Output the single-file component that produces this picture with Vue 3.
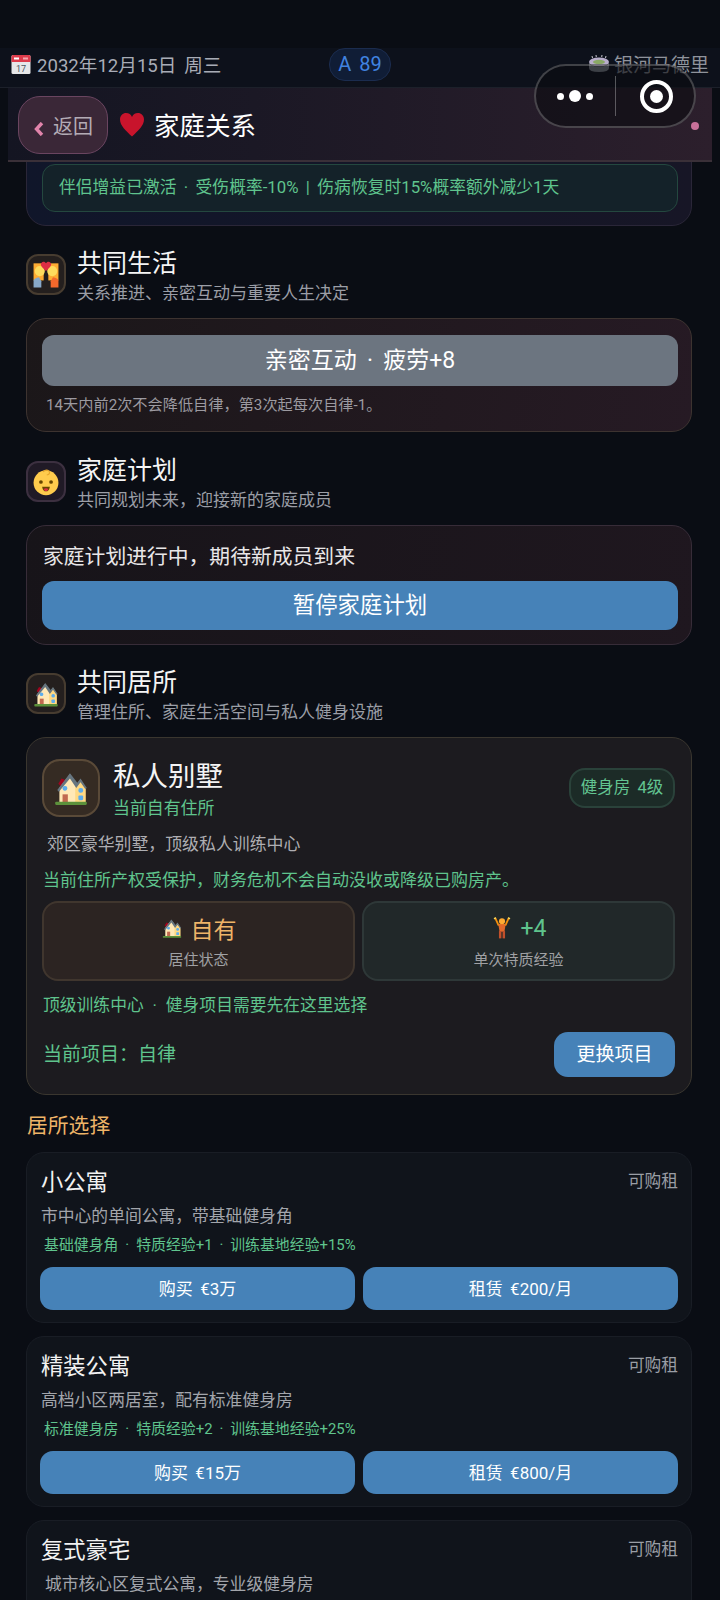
<script setup>
const homes = [
  { name: '小公寓', desc: '市中心的单间公寓，带基础健身角', perks: '基础健身角 · 特质经验+1 · 训练基地经验+15%', buy: '购买 €3万', rent: '租赁 €200/月' },
  { name: '精装公寓', desc: '高档小区两居室，配有标准健身房', perks: '标准健身房 · 特质经验+2 · 训练基地经验+25%', buy: '购买 €15万', rent: '租赁 €800/月' },
  { name: '复式豪宅', desc: '城市核心区复式公寓，专业级健身房', indent: true }
]
</script>

<template>
  <div class="page">
    <svg class="defs" width="0" height="0" aria-hidden="true">
      <symbol id="house" viewBox="0 0 36 36">
        <path d="M6 14 L9 9 L14 11 L9 17Z" fill="#a0041e"/>
        <path d="M7 18 L17 5 L24 15 L24 32 L7 32Z" fill="#ffe8b6"/>
        <path d="M22 16 L27 10 L32 18 L32 32 L22 32Z" fill="#ffd983"/>
        <path d="M5 20 L17 4 L24 13 L27 9 L33 18 L31.5 19 L27 12.5 L23 18 L17 9 L6.5 21.5Z" fill="#66757f"/>
        <rect x="10" y="16" width="4.5" height="4.5" rx="2" fill="#5dadec"/>
        <rect x="25" y="18" width="4.5" height="4.5" rx="2" fill="#5dadec"/>
        <rect x="25" y="25" width="4.5" height="4.5" rx="1" fill="#5dadec"/>
        <rect x="10" y="24" width="5" height="8" fill="#c1694f"/>
        <rect x="3" y="31" width="30" height="3" rx="1" fill="#5c913b"/>
      </symbol>
      <symbol id="couple" viewBox="0 0 36 36">
        <rect x="2" y="3" width="13" height="22" fill="#ffac33"/>
        <rect x="21" y="3" width="13" height="22" fill="#ffac33"/>
        <circle cx="10" cy="13" r="6.500" fill="#ffdc5d"/>
        <circle cx="26" cy="13" r="6.500" fill="#ffdc5d"/>
        <path d="M2 25 Q3 22 9 21 L12 26 L12 34 L2 34Z" fill="#88a9c9"/>
        <path d="M34 25 Q33 22 27 21 L24 26 L24 34 L34 34Z" fill="#f4682c"/>
        <path d="M18 13 C13 8 10 5.500 12 2.500 C14 0 17 1 18 3 C19 1 22 0 24 2.500 C26 5.500 23 8 18 13Z" fill="#dd2e44"/>
      </symbol>
      <symbol id="baby" viewBox="0 0 36 36">
        <circle cx="18" cy="19" r="16" fill="#ffcc4d"/>
        <path d="M14 5 Q18 1 22 4 Q24 8 19 9" fill="none" stroke="#e6a82e" stroke-width="1.500"/>
        <circle cx="11.500" cy="18" r="2.400" fill="#664500"/>
        <circle cx="24.500" cy="18" r="2.400" fill="#664500"/>
        <path d="M13 24 H23 Q22 30 18 30 Q14 30 13 24Z" fill="#664500"/>
        <path d="M15 27 Q18 25 21 27 Q20 30 18 30 Q16 30 15 27Z" fill="#dd2e44"/>
      </symbol>
      <symbol id="person" viewBox="0 0 36 36">
        <path d="M7 2 L12 13 L24 13 L29 2" fill="none" stroke="#f4900c" stroke-width="3"/>
        <path d="M5 3 L8 1 M28 1 L31 3" stroke="#ffdc5d" stroke-width="2.500"/>
        <circle cx="18" cy="7" r="5" fill="#ffac33"/>
        <path d="M12 12 H24 L22 24 H14Z" fill="#e1692b"/>
        <rect x="13" y="23" width="4" height="12" fill="#c1502b"/>
        <rect x="19" y="23" width="4" height="12" fill="#c1502b"/>
      </symbol>
    </svg>

    <div class="top">
      <div class="status">
        <div class="status-left">
          <svg class="cal" viewBox="0 0 20 20">
            <rect x="0.500" y="1" width="19" height="19" rx="1.500" fill="#e6e7e8"/>
            <path d="M.5 2.500 Q.5 1 2 1 H18 Q19.500 1 19.500 2.500 V8 H.5Z" fill="#dd3b4b"/>
            <rect x="3" y="3.500" width="5" height="2" fill="#fff"/>
            <rect x="12" y="3.500" width="5" height="2" fill="#f4a5ad"/>
            <text x="10" y="17.500" text-anchor="middle" class="cal-num">17</text>
          </svg>
          <span>2032年12月15日 周三</span>
        </div>
        <div class="rank">A 89</div>
        <div class="status-right">
          <svg class="stadium" viewBox="0 0 20 20">
            <path d="M3 2 L3.500 4 M7 1 L7.300 3 M13 1 L12.700 3 M17 2 L16.500 4" stroke="#c8c8d0" stroke-width="1"/>
            <ellipse cx="10" cy="8" rx="10" ry="4.500" fill="#b8aecb"/>
            <ellipse cx="10" cy="8" rx="6" ry="2.200" fill="#8aa866"/>
            <path d="M0 8 V14 Q0 18 10 18 Q20 18 20 14 V8 Q20 12.500 10 12.500 Q0 12.500 0 8Z" fill="#8d959e"/>
          </svg>
          <span>银河马德里</span>
        </div>
      </div>
      <header class="head">
        <button class="back">
          <svg class="chev" viewBox="0 0 10 14"><polyline points="8,1 2.500,7 8,13" fill="none" stroke="#e184ab" stroke-width="3.400"/></svg>
          <span>返回</span>
        </button>
        <svg class="heart" viewBox="0 0 24 24"><path d="M12 23.500 C6 18 0 12.500 0 6.500 C0 2.500 3 0 6 0 C9 0 11 1.500 12 4 C13 1.500 15 0 18 0 C21 0 24 2.500 24 6.500 C24 12.500 18 18 12 23.500Z" fill="#c8142c"/></svg>
        <h1>家庭关系</h1>
      </header>
    </div>

    <div class="capsule">
      <div class="dots"><i class="s"></i><i class="l"></i><i class="s"></i></div>
      <div class="sep"></div>
      <div class="ring"><i></i></div>
    </div>
    <i class="pink"></i>

    <main class="content">
      <section class="card first">
        <div class="hint">伴侣增益已激活 · 受伤概率-10% | 伤病恢复时15%概率额外减少1天</div>
      </section>

      <div class="sec sec-life">
        <div class="ico amber"><svg class="ico-svg"><use href="#couple"/></svg></div>
        <div><h2>共同生活</h2><p>关系推进、亲密互动与重要人生决定</p></div>
      </div>
      <section class="card life">
        <button class="btn grey big">亲密互动 · 疲劳+8</button>
        <p class="note">14天内前2次不会降低自律，第3次起每次自律-1。</p>
      </section>

      <div class="sec sec-plan">
        <div class="ico plum"><svg class="ico-svg"><use href="#baby"/></svg></div>
        <div><h2>家庭计划</h2><p>共同规划未来，迎接新的家庭成员</p></div>
      </div>
      <section class="card plan">
        <div class="plan-text">家庭计划进行中，期待新成员到来</div>
        <button class="btn blue plan-btn">暂停家庭计划</button>
      </section>

      <div class="sec sec-home">
        <div class="ico amber"><svg class="ico-svg"><use href="#house"/></svg></div>
        <div><h2>共同居所</h2><p>管理住所、家庭生活空间与私人健身设施</p></div>
      </div>
      <section class="card home">
        <div class="home-top">
          <div class="home-ico"><svg class="home-svg"><use href="#house"/></svg></div>
          <div class="home-name">
            <h3>私人别墅</h3>
            <div class="green own">当前自有住所</div>
          </div>
          <div class="badge">健身房 4级</div>
        </div>
        <p class="home-desc">郊区豪华别墅，顶级私人训练中心</p>
        <p class="green line">当前住所产权受保护，财务危机不会自动没收或降级已购房产。</p>
        <div class="stats">
          <div class="stat warm">
            <div class="val"><svg class="val-ico"><use href="#house"/></svg><span class="gold">自有</span></div>
            <div class="lbl">居住状态</div>
          </div>
          <div class="stat cool">
            <div class="val"><svg class="val-ico"><use href="#person"/></svg><span class="mint">+4</span></div>
            <div class="lbl">单次特质经验</div>
          </div>
        </div>
        <p class="green line2">顶级训练中心 · 健身项目需要先在这里选择</p>
        <div class="project">
          <span class="green cur">当前项目：自律</span>
          <button class="btn blue swap">更换项目</button>
        </div>
      </section>

      <div class="pick">居所选择</div>
      <section v-for="h in homes" :key="h.name" class="item">
        <div class="item-top"><h4>{{ h.name }}</h4><span>可购租</span></div>
        <p class="item-desc" :class="{ indent: h.indent }">{{ h.desc }}</p>
        <p v-if="h.perks" class="perks">{{ h.perks }}</p>
        <div v-if="h.buy" class="item-btns">
          <button class="btn blue small">{{ h.buy }}</button>
          <button class="btn blue small">{{ h.rent }}</button>
        </div>
      </section>
    </main>
  </div>
</template>

<style>
html, body { margin: 0; background: #0a0d14; }
</style>

<style scoped>
* { box-sizing: border-box; }
h1, h2, h3, h4, p { margin: 0; font-weight: 400; }
.page {
  position: relative;
  width: 720px;
  height: 1600px;
  overflow: hidden;
  background: #0a0d14;
  color: #fff;
  font-family: Roboto, "Noto Sans CJK SC", sans-serif;
  font-weight: 400;
  word-spacing: .2em;
}
.defs { position: absolute; }
.top { position: absolute; top: 48px; left: 0; width: 720px; z-index: 3; }
.status {
  height: 40px;
  background: #0d111b;
  border-bottom: 1px solid #1c202a;
  display: flex;
  align-items: center;
  justify-content: space-between;
  padding: 0 11px 8px 11px;
  color: #a8acb6;
  font-size: 18.600px;
  position: relative;
}
.status-left, .status-right { display: flex; align-items: center; }
.cal { width: 20px; height: 20px; margin-right: 6px; }
.cal-num { font-size: 9px; fill: #4a5560; font-family: Roboto, sans-serif; }
.rank {
  position: absolute;
  left: 329px;
  top: 0;
  width: 62px;
  height: 33px;
  border-radius: 16px;
  background: #101d36;
  border: 1px solid #1b2c4e;
  color: #4083e0;
  font-size: 20px;
  line-height: 31px;
  text-align: center;
}
.status-right { font-size: 19px; color: #8f939c; }
.stadium { width: 20px; height: 20px; margin-right: 5px; }
.head {
  margin: 0 8px;
  height: 74px;
  background: linear-gradient(90deg, #141522 0%, #1b1825 35%, #2c1f2c 100%);
  border-bottom: 2px solid #3a3038;
  display: flex;
  align-items: center;
  padding: 0 0 0 10px;
}
.back {
  width: 90px;
  height: 58px;
  margin-top: 2px;
  border-radius: 22px;
  background: #3a2737;
  border: 1px solid #6a4560;
  display: flex;
  align-items: center;
  justify-content: flex-start;
  padding: 0 0 0 15px;
  color: #b3abb5;
  font: inherit;
  font-size: 20px;
}
.chev { width: 10px; height: 14px; margin: 8px 9px 0 0; }
.heart { width: 24px; height: 24px; margin: 2px 0 0 12px; }
h1 { font-size: 25.500px; margin: -2px 0 0 10px; color: #fff; }

.capsule {
  position: absolute;
  left: 534px;
  top: 64px;
  width: 162px;
  height: 64px;
  border-radius: 32px;
  background: rgba(12, 11, 16, .62);
  border: 2px solid rgba(255, 255, 255, .22);
  z-index: 4;
  display: flex;
  align-items: center;
}
.dots { width: 78px; display: flex; align-items: center; justify-content: center; gap: 5px; }
.dots i { display: block; border-radius: 50%; background: #fff; }
.dots .s { width: 7px; height: 7px; }
.dots .l { width: 12px; height: 12px; }
.sep { width: 1px; height: 40px; margin-left: 1px; background: rgba(255, 255, 255, .3); }
.ring {
  width: 33px;
  height: 33px;
  margin-left: 24px;
  border-radius: 50%;
  border: 4px solid #fff;
  display: flex;
  align-items: center;
  justify-content: center;
}
.ring i { display: block; width: 13px; height: 13px; border-radius: 50%; background: #fff; }
.pink { position: absolute; left: 691px; top: 122px; width: 8px; height: 8px; border-radius: 50%; background: #c9719a; z-index: 4; }

.content { padding: 130px 28px 0 26px; width: 720px; }
.card {
  width: 666px;
  border-radius: 20px;
  border: 1px solid #2a2a30;
  padding: 0 13px 0 15px;
}
.first { height: 96px; padding-top: 33px; border-color: #2a2638; background: linear-gradient(90deg, #10162a, #171626); }
.hint {
  height: 48px;
  border-radius: 13px;
  background: #142229;
  border: 1px solid #24483f;
  color: #5fc48d;
  font-size: 16.800px;
  line-height: 44px;
  padding-left: 16px;
}
.sec { display: flex; align-items: center; gap: 11px; }
.sec h2 { font-size: 25px; line-height: 32px; color: #f5f5f5; }
.sec p { font-size: 17px; line-height: 24px; color: #9b9ea6; margin-top: 1px; }
.sec-life { margin-top: 22px; }
.sec-plan { margin-top: 23px; }
.sec-home { margin-top: 22px; }
.ico { width: 40px; height: 41px; border-radius: 12px; display: flex; align-items: center; justify-content: center; margin-top: -4px; }
.ico.amber { background: #241f1e; border: 2px solid #473c30; }
.ico.plum { background: #201a26; border: 2px solid #3c3040; }
.ico-svg { width: 28px; height: 28px; }
.life { margin-top: 13px; height: 114px; padding-top: 16px; background: linear-gradient(100deg, #1b1719, #261a24); border-color: #3d3330; }
.btn { display: block; border: 0; color: #fff; font: inherit; cursor: pointer; padding: 0; text-align: center; word-spacing: inherit; }
.grey { background: #6c7580; }
.blue { background: #4682b8; }
.big { width: 636px; height: 51px; border-radius: 12px; font-size: 23px; padding-bottom: 6px; word-spacing: .2em; }
.note { font-size: 15.200px; line-height: 20px; color: #9c9aa0; margin: 9px 0 0 4px; }
.plan { margin-top: 13px; height: 120px; background: linear-gradient(100deg, #171419, #1f171f); border-color: #372c38; }
.plan-text { font-size: 20.800px; line-height: 30px; color: #e9e7e8; padding: 16px 0 0 1px; height: 55px; }
.plan-btn { width: 636px; height: 49px; border-radius: 12px; font-size: 22.400px; padding-bottom: 6px; }
.home { margin-top: 13px; height: 358px; background: #1c1b1f; border-color: #3a362f; padding: 21px 16px 0 15px; }
.home-top { display: flex; align-items: flex-start; }
.home-ico { width: 58px; height: 58px; border-radius: 18px; background: #352b23; border: 2px solid #5a4a38; display: flex; align-items: center; justify-content: center; }
.home-svg { width: 38px; height: 38px; }
.home-name { margin-left: 13px; flex: 1; }
h3 { font-size: 27.500px; line-height: 34px; margin-top: 1px; color: #f4f4f4; }
.green { color: #5fc48d; }
.own { font-size: 16.900px; line-height: 24px; margin-top: 2px; }
.badge { width: 106px; height: 40px; margin-top: 9px; border-radius: 16px; background: #1c2b27; border: 2px solid #2a423a; color: #62c491; font-size: 16.500px; line-height: 35px; text-align: center; }
.home-desc { font-size: 16.900px; line-height: 24px; color: #aeaeb2; margin: 12px 0 0 5px; }
.line { font-size: 17px; line-height: 24px; margin: 12px 0 0 1px; }
.stats { display: flex; gap: 7px; margin-top: 9px; }
.stat { width: 313px; height: 80px; border-radius: 16px; text-align: center; padding-top: 8px; }
.warm { background: #2c2422; border: 2px solid #40362e; }
.cool { background: #212829; border: 2px solid #2e3838; }
.val { height: 34px; display: flex; align-items: center; justify-content: center; gap: 8px; font-size: 23px; }
.val-ico { width: 22px; height: 24px; }
.gold { color: #eeb468; }
.mint { color: #5fc48d; }
.lbl { font-size: 15px; line-height: 22px; color: #a0a1a4; margin-top: 4px; }
.line2 { font-size: 16.800px; line-height: 24px; margin: 12px 0 0 1px; word-spacing: .28em; }
.project { display: flex; align-items: center; justify-content: space-between; margin-top: 15px; }
.cur { font-size: 19px; margin-left: 1px; padding-bottom: 4px; }
.swap { width: 121px; height: 45px; border-radius: 14px; font-size: 19px; padding-bottom: 4px; }
.pick { font-size: 20.800px; line-height: 30px; color: #eeb468; margin: 16px 0 0 1px; }
.item {
  width: 666px;
  height: 171px;
  margin-top: 13px;
  border-radius: 18px;
  background: #10141b;
  border: 1px solid #191d25;
  padding: 11px 13px 0 14px;
}
.pick + .item { margin-top: 11px; }
.item-top { display: flex; justify-content: space-between; align-items: center; height: 32px; }
h4 { font-size: 22.300px; color: #f2f2f2; }
.item-top span { font-size: 16.700px; color: #9a9ea5; }
.item-desc { font-size: 16.800px; line-height: 24px; color: #a2a5ab; margin-top: 8px; }
.indent { padding-left: 4px; }
.perks { font-size: 14.900px; line-height: 22px; color: #5fc48d; margin: 6px 0 0 3px; }
.item-btns { display: flex; gap: 8px; margin: 11px 0 0 -1px; }
.small { width: 315px; height: 43px; border-radius: 13px; font-size: 17px; padding-bottom: 2px; }
</style>
